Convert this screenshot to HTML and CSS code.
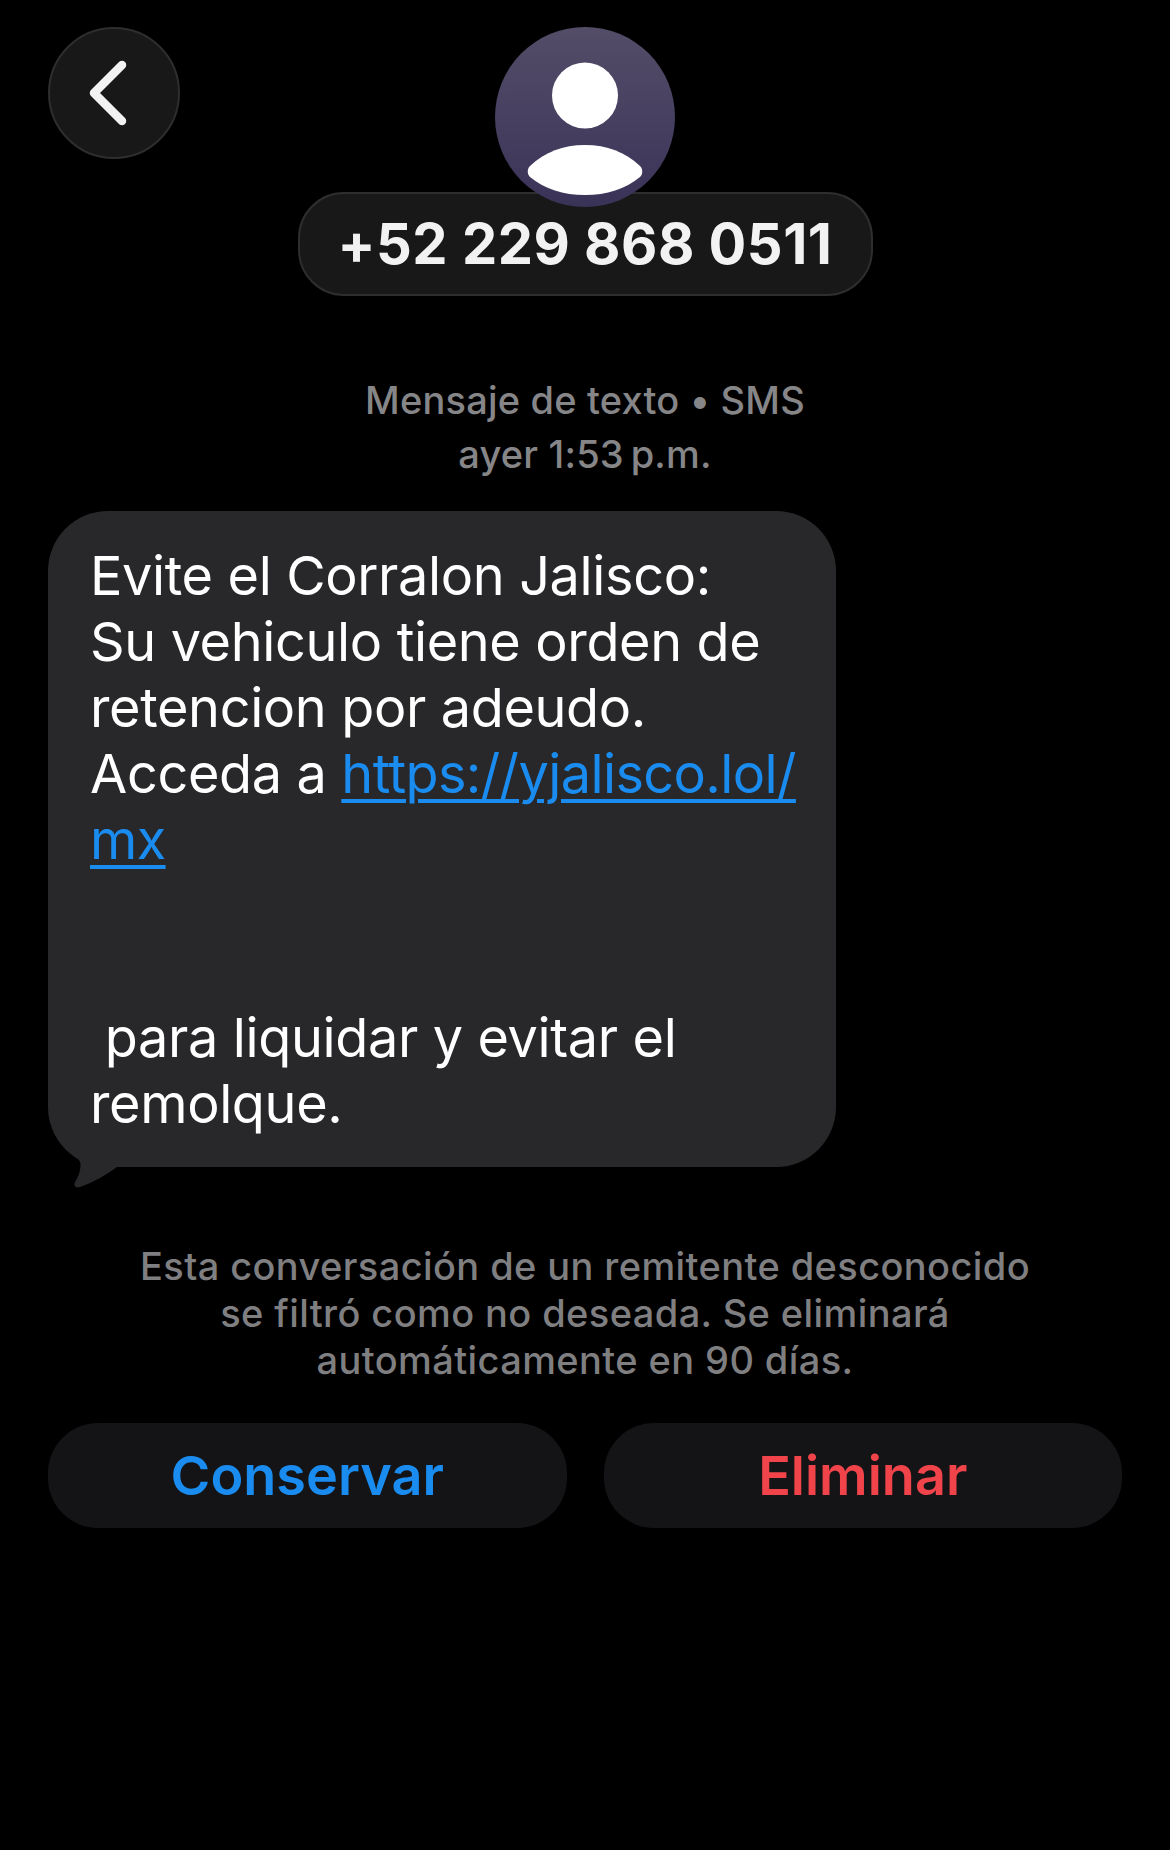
FILE: index.html
```html
<!DOCTYPE html>
<html lang="es">
<head>
    <meta charset="UTF-8">
    <title>Mensaje</title>
    <link rel="stylesheet" href="styles.css">
</head>
<body>
    <div class="main-container">
        <!-- Top bar -->
        <div class="header">
            <button class="back-button">
                <svg class="back-icon" viewBox="0 0 40 66" width="40" height="66">
                    <path d="M34 5 L6 33 L34 61" fill="none" stroke="#f2f2f2" stroke-width="8.5" stroke-linecap="round" stroke-linejoin="round"/>
                </svg>
            </button>
            <div class="contact">
                <div class="avatar">
                    <svg viewBox="0 0 180 180" width="180" height="180">
                        <circle cx="90" cy="68.5" r="33" fill="#fff"/>
                        <path d="M35 139 C50 125 68 118 90 118 C112 118 130 125 145 139 C148 142 148 147 145 150 C130 162 112 168 90 168 C68 168 50 162 35 150 C32 147 32 142 35 139 Z" fill="#fff"/>
                    </svg>
                </div>
                <div class="contact-name">+52 229 868 0511</div>
            </div>
        </div>

        <div class="meta">
            Mensaje de texto • SMS<br>
            ayer 1:53&thinsp;p.m.
        </div>

        <!-- Message -->
        <div class="bubble">
            Evite el Corralon Jalisco:<br>
            Su vehiculo tiene orden de<br>
            retencion por adeudo.<br>
            Acceda a <a class="link" href="#">https://yjalisco.lol/<br>mx</a><br>
            <br>
            <br>
            &nbsp;para liquidar y evitar el<br>
            remolque.
            <svg class="bubble-tail" viewBox="0 0 90 60" width="90" height="60">
                <path d="M5 0 C10 12 20 22 30 29 C33 32 33 35 32 40 C31 45 29 49 27 52 C25 56 28 58 32 57 C46 52 58 45 69 37 L90 37 L90 0 Z" fill="#28282a"/>
            </svg>
        </div>

        <div class="notice">
            Esta conversación de un remitente desconocido<br>
            se filtró como no deseada. Se eliminará<br>
            automáticamente en 90 días.
        </div>

        <div class="actions">
            <button class="action action-keep">Conservar</button>
            <button class="action action-delete">Eliminar</button>
        </div>
    </div>
</body>
</html>
```

FILE: styles.css
```css
/* General styling */
body {
    font-family: Inter, "Noto Sans", sans-serif;
    margin: 0;
    height: 1850px;
    overflow: hidden;
    background-color: #000;
    color: #fff;
}

.main-container {
    display: flex;
    flex-direction: column;
    padding: 27px 48px 0;
}

/* Top bar */
.header {
    display: grid;
    grid-template-columns: 132px 1fr 132px;
}

.back-button {
    display: flex;
    align-items: center;
    justify-content: center;
    width: 132px;
    height: 132px;
    padding: 0 12px 0 0;
    border: 2px solid #2e2e2e;
    border-radius: 50%;
    background-color: #181818;
}

.contact {
    display: flex;
    flex-direction: column;
    align-items: center;
}

.avatar {
    width: 180px;
    height: 180px;
    margin-bottom: -15px; /* sits over the top of the name pill */
    border-radius: 50%;
    background: linear-gradient(#544d68, #3a3358);
    position: relative;
    z-index: 1;
}

.avatar svg {
    display: block;
}

.contact-name {
    display: flex;
    align-items: center;
    justify-content: center;
    box-sizing: border-box;
    width: 575px;
    height: 104px;
    border: 2px solid #2e2e2e;
    border-radius: 46px;
    background-color: #181818;
    color: #f2f2f2;
    font-size: 56px;
    font-weight: 700;
    letter-spacing: 0.5px;
}

.meta {
    margin-top: 77px;
    text-align: center;
    font-size: 38px;
    font-weight: 500;
    line-height: 54px;
    letter-spacing: 0.2px;
    color: #868688;
}

/* Message bubble */
.bubble {
    position: relative;
    box-sizing: border-box;
    width: 788px;
    margin-top: 30px;
    padding: 32px 20px 30px 42px;
    border-radius: 60px;
    background-color: #28282a;
    font-size: 54px;
    line-height: 66px;
    letter-spacing: -0.36px;
    color: #fff;
}

.link {
    color: #1a8cf0;
    letter-spacing: -0.6px;
    text-decoration: underline;
    text-decoration-thickness: 4px;
    text-underline-offset: 6px;
}

.bubble-tail {
    position: absolute;
    left: 0;
    bottom: -23px;
}

.notice {
    margin-top: 76px;
    text-align: center;
    font-size: 38px;
    font-weight: 500;
    line-height: 47px;
    letter-spacing: 0.4px;
    color: #7f7f81;
}

/* Keep / delete buttons */
.actions {
    display: grid;
    grid-template-columns: 1fr 1fr;
    gap: 37px;
    margin-top: 39px;
}

.action {
    height: 105px;
    border: none;
    border-radius: 50px;
    background-color: #141416;
    font-family: inherit;
    font-size: 54px;
    font-weight: 600;
}

.action-keep {
    color: #1a8cf0;
}

.action-delete {
    color: #f0444a;
}
```
